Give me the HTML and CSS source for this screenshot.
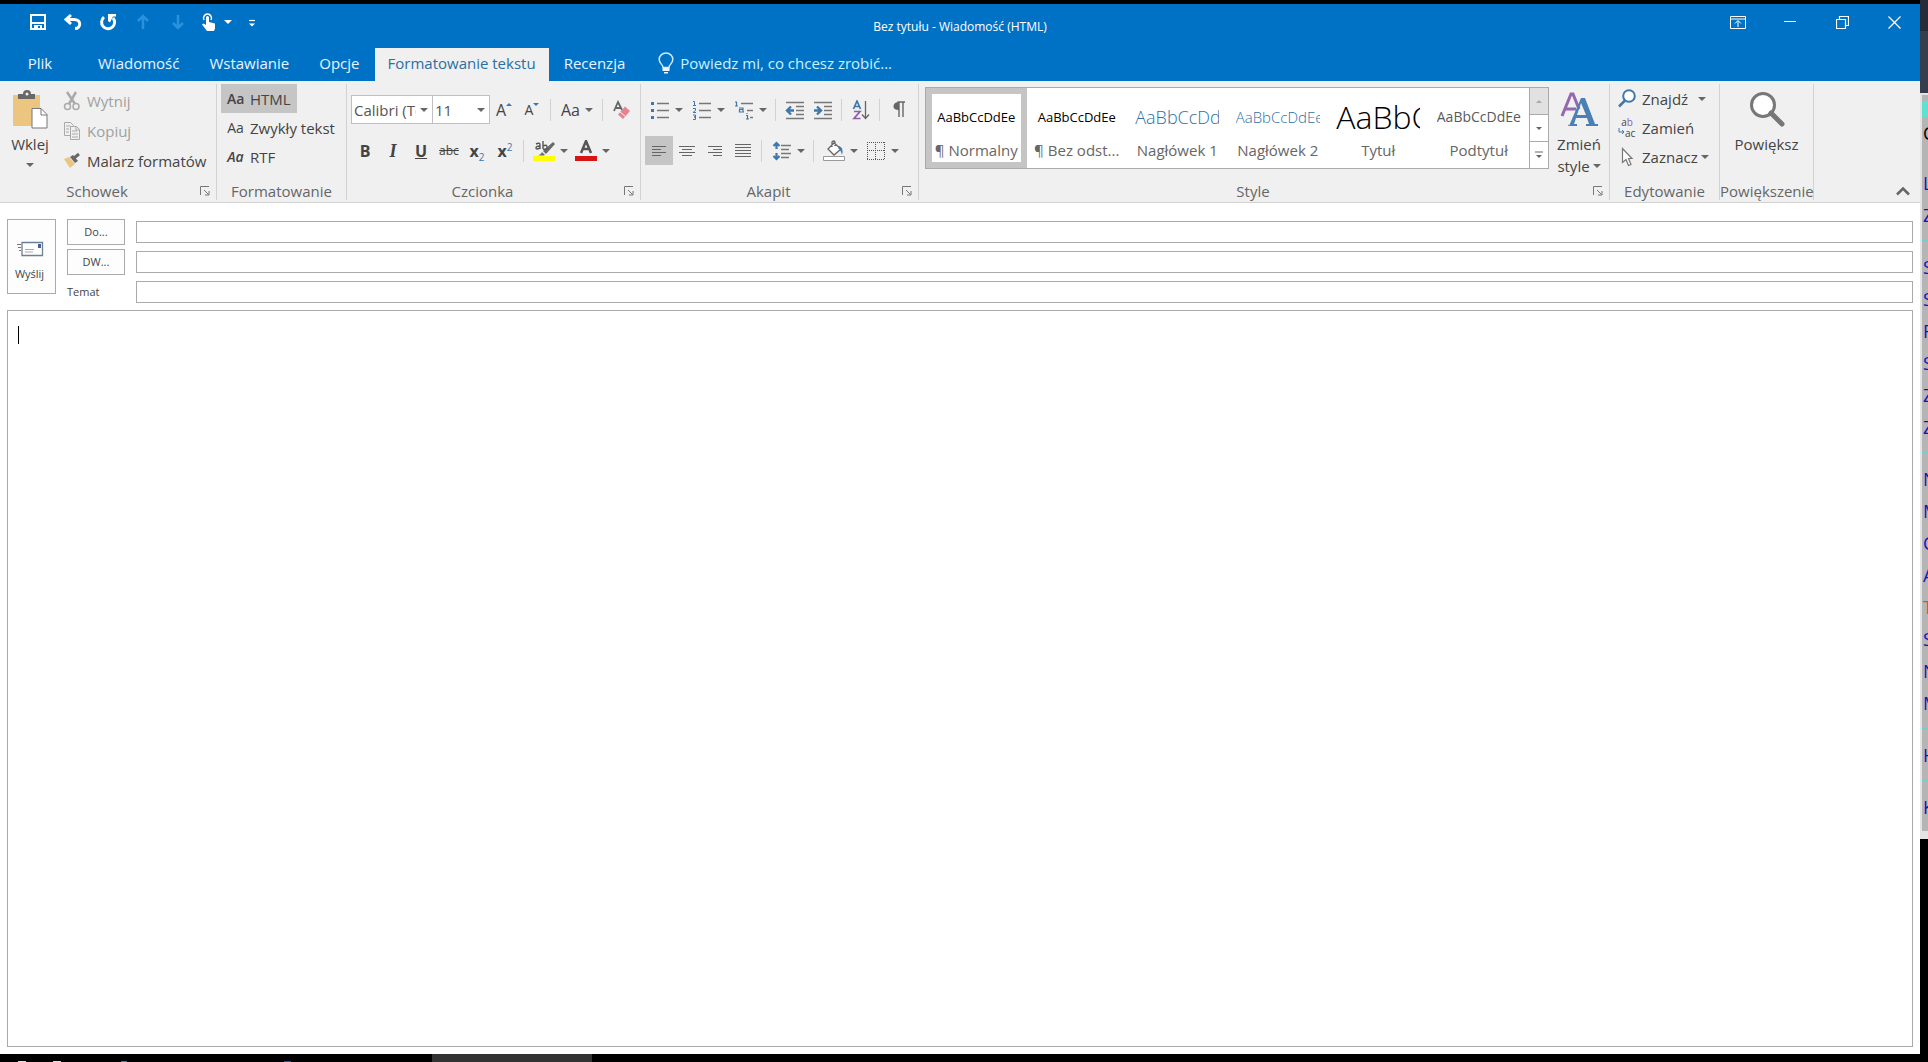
FILE: index.html
```html
<!DOCTYPE html>
<html lang="pl">
<head>
<meta charset="utf-8">
<title>Bez tytułu - Wiadomość (HTML)</title>
<link rel="stylesheet" href="styles.css">
</head>
<body>
<div class="desktop">
  <main class="window">
    <header class="titlebar">
      <div class="quick">
        <button class="qbtn" aria-label="Zapisz"><svg width="18" height="18" viewBox="0 0 18 18"><path d="M2 2h14v14H2z" fill="none" stroke="#fff" stroke-width="2"/><path d="M3 9h12v2H3zM5 12h8v4h-2v-3H9v3H5z" fill="#fff"/></svg></button>
        <button class="qbtn" aria-label="Cofnij"><svg width="20" height="18" viewBox="0 0 20 18"><path d="M8 2L3 6.500L8 11M3.500 6.500H11c8 0 7 9 1 9" fill="none" stroke="#fff" stroke-width="3"/></svg></button>
        <button class="qbtn" aria-label="Ponów"><svg width="18" height="18" viewBox="0 0 18 18"><path d="M5 4.200A6.500 6.500 0 1 0 14 5" fill="none" stroke="#fff" stroke-width="3"/><path d="M9 1h8v2.500h-3L11 9.500L9 8z" fill="#fff"/></svg></button>
        <button class="qbtn" aria-label="Poprzedni element"><svg width="14" height="18" viewBox="0 0 14 18"><path d="M7 16V3M2 8l5-5l5 5" fill="none" stroke="#2a92dc" stroke-width="2.500"/></svg></button>
        <button class="qbtn" aria-label="Następny element"><svg width="14" height="18" viewBox="0 0 14 18"><path d="M7 2v13M2 10l5 5l5-5" fill="none" stroke="#2a92dc" stroke-width="2.500"/></svg></button>
        <button class="qbtn touch" aria-label="Tryb dotyku"><svg width="16" height="20" viewBox="0 0 16 20"><path d="M3 8A4 4 0 1 1 10 8" fill="none" stroke="#fff" stroke-width="1.500"/><path d="M5 5q1.500-2 3 0v5l6 1.500v5l-1 2.500H6L1 12.500l1.500-1L5 13z" fill="#fff"/></svg></button>
        <button class="qmore" aria-label="Opcje dotyku"><i class="tri"></i></button>
        <button class="qmore wide" aria-label="Dostosuj pasek"><svg width="8" height="9" viewBox="0 0 8 9"><path d="M1 2.500h6" stroke="#fff" stroke-width="1.200"/><path d="M1 5.500h6L4 8.500z" fill="#fff"/></svg></button>
      </div>
      <h1 class="title">Bez tytułu - Wiadomość (HTML)</h1>
      <div class="controls">
        <button class="cbtn" aria-label="Opcje wstążki"><svg width="16" height="14" viewBox="0 0 16 14"><path d="M.5 1.500h15v12H.5zM.5 4h15M8 12V6M5 8.500L8 5.500l3 3" fill="none" stroke="#fff"/></svg></button>
        <button class="cbtn" aria-label="Minimalizuj"><svg width="12" height="12" viewBox="0 0 12 12"><path d="M0 5.500h12" stroke="#fff"/></svg></button>
        <button class="cbtn" aria-label="Przywróć"><svg width="13" height="13" viewBox="0 0 13 13"><path d="M.5 3.500h9v9h-9zM3.500 3V.5h9v9H10" fill="none" stroke="#fff" stroke-width="1.200"/></svg></button>
        <button class="cbtn" aria-label="Zamknij"><svg width="13" height="13" viewBox="0 0 13 13"><path d="M.5.5l12 12M12.500.5l-12 12" stroke="#fff" stroke-width="1.200"/></svg></button>
      </div>
    </header>

    <nav class="tabs">
      <button class="tab file">Plik</button>
      <button class="tab">Wiadomość</button>
      <button class="tab">Wstawianie</button>
      <button class="tab">Opcje</button>
      <button class="tab active">Formatowanie tekstu</button>
      <button class="tab">Recenzja</button>
      <button class="tab tell"><svg width="16" height="22" viewBox="0 0 16 22"><path d="M5 15.500c0-3-3.800-4-3.800-8a6.800 6.500 0 0 1 13.600 0c0 4-3.800 5-3.800 8z" fill="none" stroke="#cfeaff" stroke-width="1.500"/><path d="M4.500 16h7v3h-7zM6 20h4v1.500H6z" fill="#e6f5ff"/></svg>Powiedz mi, co chcesz zrobić...</button>
    </nav>

    <section class="ribbon">
      <div class="group clipboard">
        <div class="content">
          <button class="big paste">
            <svg width="36" height="40" viewBox="0 0 36 40"><path d="M1 5h27v31H1z" fill="#ecc581"/><path d="M6 9V4h5q0-4 4-4t4 4h4v5z" fill="#686868"/><circle cx="15" cy="4" r="1.500" fill="#f0f0f0"/><path d="M20 18.500h9l6 6V38H20z" fill="#fff" stroke="#777"/><path d="M29 18.500V25h6" fill="none" stroke="#777"/></svg>
            <span>Wklej</span><i class="tri"></i>
          </button>
          <div class="stack loose">
            <button class="line" disabled><svg width="18" height="20" viewBox="0 0 18 20"><path d="M4 1l8 12M13 1L6 13" stroke="#aaa" stroke-width="2.500" fill="none"/><circle cx="4.500" cy="15.500" r="3" fill="none" stroke="#aaa" stroke-width="1.500"/><circle cx="13" cy="15.500" r="3" fill="none" stroke="#aaa" stroke-width="1.500"/></svg>Wytnij</button>
            <button class="line" disabled><svg width="18" height="20" viewBox="0 0 18 20"><path d="M7 14.500H1.500v-13h6l3 3V6M3 5h4M3 8h3M3 11h3" fill="none" stroke="#aaa"/><path d="M7.500 5.500h6l3 3v10h-9zM9 10h5M9 13h6M9 16h6M13 5.500V9h3" fill="#f0f0f0" stroke="#aaa"/></svg>Kopiuj</button>
            <button class="line"><svg width="18" height="20" viewBox="0 0 18 20"><path d="M1 8l5-2l6 7l-5 4z" fill="#ecc581"/><path d="M7 6l3-2l5 6l-3 2z" fill="#686868"/><path d="M11 7l5-4" stroke="#686868" stroke-width="3"/></svg>Malarz formatów</button>
          </div>
        </div>
        <div class="caption"><span>Schowek</span><button class="launcher" aria-label="Schowek: więcej"><svg width="10" height="10" viewBox="0 0 10 10"><path d="M.5 9V.5H9M4 4l4.500 4.500M9 5v4H5" fill="none" stroke="#777"/></svg></button></div>
      </div>

      <div class="group format">
        <div class="content">
          <div class="stack">
            <button class="mode on"><b>Aa</b>HTML</button>
            <button class="mode"><span>Aa</span>Zwykły tekst</button>
            <button class="mode"><em>Aa</em>RTF</button>
          </div>
        </div>
        <div class="caption"><span>Formatowanie</span></div>
      </div>

      <div class="group font">
        <div class="content rows">
          <div class="bar">
            <label class="combo name"><select aria-label="Czcionka"><option>Calibri (Tekst podstawowy)</option></select><i class="tri"></i></label>
            <label class="combo size"><select aria-label="Rozmiar czcionki"><option>11</option></select><i class="tri"></i></label>
            <button class="ib" aria-label="Zwiększ czcionkę"><span class="glyph">A</span><svg width="6" height="16" viewBox="0 0 6 16"><path d="M0 4l3-3l3 3z" fill="#3f77ad"/></svg></button>
            <button class="ib" aria-label="Zmniejsz czcionkę"><span class="glyph small">A</span><svg width="6" height="16" viewBox="0 0 6 16"><path d="M0 1h6L3 4z" fill="#3f77ad"/></svg></button>
            <i class="sep"></i>
            <button class="ib dd"><span class="glyph">Aa</span><i class="tri"></i></button>
            <i class="sep"></i>
            <button class="ib" aria-label="Wyczyść formatowanie"><svg width="18" height="20" viewBox="0 0 18 20"><path d="M1 11L5 2l4 8M3 8h5" fill="none" stroke="#666" stroke-width="1.800"/><path d="M12 6.500l5 4.500l-7 8l-5-4.500z" fill="#e4848f"/><path d="M7 12l5.500 4.500" stroke="#f0f0f0" stroke-width="1"/></svg></button>
          </div>
          <div class="bar">
            <button class="ib"><b class="glyph">B</b></button>
            <button class="ib"><i class="glyph ital">I</i></button>
            <button class="ib"><u class="glyph">U</u></button>
            <button class="ib"><s class="glyph strike">abc</s></button>
            <button class="ib"><span class="glyph bold">x<sub>2</sub></span></button>
            <button class="ib"><span class="glyph bold">x<sup>2</sup></span></button>
            <i class="sep"></i>
            <button class="ib dd" aria-label="Wyróżnienie"><svg width="22" height="22" viewBox="0 0 22 22"><path d="M0 16h22v5H0z" fill="#ff0"/><path d="M20 2l2 2l-9 10l-3-3z" fill="#686868"/><path d="M5 15q3 0 4-3l3 3q-3 1-7 0z" fill="#686868"/><path d="M3 4q4-2 4 1v4M7 6q-4 0-4 2q0 2 4 0M10 1v8M10 6q4-2 4 1t-4 2" fill="none" stroke="#555" stroke-width="1.400"/></svg><i class="tri"></i></button>
            <button class="ib dd" aria-label="Kolor czcionki"><svg width="22" height="22" viewBox="0 0 22 22"><path d="M0 16h22v5H0z" fill="#d91313"/><path d="M6 13l5-12l5 12M8 9h6" fill="none" stroke="#555" stroke-width="2.500"/></svg><i class="tri"></i></button>
          </div>
        </div>
        <div class="caption"><span>Czcionka</span><button class="launcher" aria-label="Czcionka: więcej"><svg width="10" height="10" viewBox="0 0 10 10"><path d="M.5 9V.5H9M4 4l4.500 4.500M9 5v4H5" fill="none" stroke="#777"/></svg></button></div>
      </div>

      <div class="group para">
        <div class="content rows">
          <div class="bar">
            <button class="ib dd" aria-label="Punktory"><svg width="20" height="20" viewBox="0 0 20 20"><path d="M7 3.500h12M7 10.500h12M7 17.500h12" stroke="#777" stroke-width="1.300"/><path d="M1 2h3v3H1zM1 9h3v3H1zM1 16h3v3H1z" fill="#3f77ad"/></svg><i class="tri"></i></button>
            <button class="ib dd" aria-label="Numerowanie"><svg width="20" height="20" viewBox="0 0 20 20"><path d="M7 3.500h12M7 10.500h12M7 17.500h12" stroke="#777" stroke-width="1.300"/><path d="M1 1.500h1.500v4M1 5.500h3M1 8.500h2.500v2L1 12.500h3M1 15h2.500v2H2h1.500v2.500H1" fill="none" stroke="#3f77ad"/></svg><i class="tri"></i></button>
            <button class="ib dd" aria-label="Lista wielopoziomowa"><svg width="20" height="20" viewBox="0 0 20 20"><path d="M7 3.500h12M13 10.500h6M16 17.500h3" stroke="#777" stroke-width="1.300"/><path d="M1 2h1.500v4M1 6h3M5 8h4v4M9 9.500H5.500V12H10M13 13v1M12 15.500h1.500V19M12 19h3" fill="none" stroke="#3f77ad" stroke-width="1.200"/></svg><i class="tri"></i></button>
            <i class="sep"></i>
            <button class="ib" aria-label="Zmniejsz wcięcie"><svg width="20" height="20" viewBox="0 0 20 20"><path d="M1 2.500h18M11 6.500h8M11 10.500h8M11 14.500h8M1 18.500h18" stroke="#777" stroke-width="1.300"/><path d="M9 10.500H3M6 6.500l-4 4l4 4" fill="none" stroke="#3f77ad" stroke-width="2.400"/></svg></button>
            <button class="ib" aria-label="Zwiększ wcięcie"><svg width="20" height="20" viewBox="0 0 20 20"><path d="M1 2.500h18M11 6.500h8M11 10.500h8M11 14.500h8M1 18.500h18" stroke="#777" stroke-width="1.300"/><path d="M1 10.500h6M4 6.500l4 4l-4 4" fill="none" stroke="#3f77ad" stroke-width="2.400"/></svg></button>
            <i class="sep"></i>
            <button class="ib" aria-label="Sortuj"><svg width="18" height="20" viewBox="0 0 18 20"><path d="M1.500 9L5 1l3.500 8M3 6.500h4" fill="none" stroke="#3f77ad" stroke-width="1.700"/><path d="M2 11.500h6L2 18.500h6.500" fill="none" stroke="#8a5fa5" stroke-width="1.700"/><path d="M13.500 1v17M10 14.500l3.500 4l3.500-4" fill="none" stroke="#666" stroke-width="1.300"/></svg></button>
            <i class="sep"></i>
            <button class="ib" aria-label="Znaki niedrukowane"><svg width="14" height="18" viewBox="0 0 14 18"><path d="M5.500 1H13M7 1v15M11 1v15" stroke="#666" stroke-width="1.400"/><path d="M7 1v8Q1 9 1.500 5Q2 1 7 1z" fill="#666"/></svg></button>
          </div>
          <div class="bar">
            <button class="ib on" aria-label="Do lewej"><svg width="16" height="16" viewBox="0 0 16 16"><path d="M1 3.500h14M1 6.500h9M1 9.500h14M1 12.500h9" stroke="#666"/></svg></button>
            <button class="ib" aria-label="Do środka"><svg width="16" height="16" viewBox="0 0 16 16"><path d="M0 3.500h16M3 6.500h10M0 9.500h16M3 12.500h10" stroke="#666"/></svg></button>
            <button class="ib" aria-label="Do prawej"><svg width="16" height="16" viewBox="0 0 16 16"><path d="M1 3.500h14M6 6.500h9M1 9.500h14M6 12.500h9" stroke="#666"/></svg></button>
            <button class="ib" aria-label="Wyjustuj"><svg width="16" height="16" viewBox="0 0 16 16"><path d="M0 1.500h16M0 4.500h16M0 7.500h16M0 10.500h16M0 13.500h16" stroke="#666"/></svg></button>
            <i class="sep"></i>
            <button class="ib dd" aria-label="Interlinia"><svg width="20" height="20" viewBox="0 0 20 20"><path d="M9 4.500h10M9 8.500h8M9 12.500h10M9 16.500h8" stroke="#777" stroke-width="1.300"/><path d="M4.500 3v5M1.500 5l3-3l3 3M4.500 12v5M1.500 15l3 3l3-3" fill="none" stroke="#3f77ad" stroke-width="2.200"/></svg><i class="tri"></i></button>
            <i class="sep"></i>
            <button class="ib dd" aria-label="Cieniowanie"><svg width="22" height="22" viewBox="0 0 22 22"><path d="M.5 16.500h21v4H.5z" fill="#fff" stroke="#999"/><path d="M11 3l7 6l-7 6l-6-6zM9 7V2q2-2 3 0v4" fill="#fff" stroke="#666" stroke-width="1.300"/><path d="M16 6q5 2 3 9q-1-5-4-7z" fill="#3f77ad"/></svg><i class="tri"></i></button>
            <button class="ib dd" aria-label="Obramowania"><svg width="20" height="20" viewBox="0 0 20 20"><path d="M1 1.500h18M1 18.500h18M1.500 1v18M18.500 1v18M9.500 1v18M1 9.500h18" stroke="#555" stroke-dasharray="1 1"/></svg><i class="tri"></i></button>
          </div>
        </div>
        <div class="caption"><span>Akapit</span><button class="launcher" aria-label="Akapit: więcej"><svg width="10" height="10" viewBox="0 0 10 10"><path d="M.5 9V.5H9M4 4l4.500 4.500M9 5v4H5" fill="none" stroke="#777"/></svg></button></div>
      </div>

      <div class="group styles">
        <div class="content">
          <div class="gallery">
            <button class="style chosen"><span class="sample">AaBbCcDdEe</span><span class="label">¶ Normalny</span></button>
            <button class="style"><span class="sample">AaBbCcDdEe</span><span class="label">¶ Bez odst...</span></button>
            <button class="style"><span class="sample h1">AaBbCcDdEe</span><span class="label">Nagłówek 1</span></button>
            <button class="style"><span class="sample h2">AaBbCcDdEe</span><span class="label">Nagłówek 2</span></button>
            <button class="style"><span class="sample head">AaBbCcDdEe</span><span class="label">Tytuł</span></button>
            <button class="style"><span class="sample sub">AaBbCcDdEe</span><span class="label">Podtytuł</span></button>
          </div>
          <div class="scroller">
            <button disabled aria-label="W górę"><svg width="8" height="5" viewBox="0 0 8 5"><path d="M1 4l3-3l3 3z" fill="#aaa"/></svg></button>
            <button aria-label="W dół"><svg width="8" height="5" viewBox="0 0 8 5"><path d="M1 1h6L4 4z" fill="#666"/></svg></button>
            <button aria-label="Więcej stylów"><svg width="8" height="8" viewBox="0 0 8 8"><path d="M0 1h8" stroke="#666"/><path d="M1 4h6L4 7z" fill="#666"/></svg></button>
          </div>
          <button class="big change">
            <svg width="38" height="40" viewBox="0 0 38 40"><path d="M2 26L11 4h2l6 15M5 19h11" fill="none" stroke="#9468ae" stroke-width="3"/><path d="M9 36L21 8h4l10 26h3v2H26v-2h3l-2-6H16l-2 6h3v2H8v-2zM17 25h9l-5-12z" fill="#4a80b5" fill-rule="evenodd"/></svg>
            <span>Zmień</span><span class="with">style<i class="tri"></i></span>
          </button>
        </div>
        <div class="caption"><span>Style</span><button class="launcher" aria-label="Style: więcej"><svg width="10" height="10" viewBox="0 0 10 10"><path d="M.5 9V.5H9M4 4l4.500 4.500M9 5v4H5" fill="none" stroke="#777"/></svg></button></div>
      </div>

      <div class="group edit">
        <div class="content">
          <div class="stack">
            <button class="line"><svg width="18" height="20" viewBox="0 0 18 20"><circle cx="11" cy="7" r="5.800" fill="#fff" stroke="#3f77ad" stroke-width="2"/><path d="M7 11.500l-6 6" stroke="#3f77ad" stroke-width="2.500"/></svg>Znajdź<i class="tri far"></i></button>
            <button class="line"><span class="swap"><span>a<b>b</b></span><span class="to"><svg width="7" height="8" viewBox="0 0 7 8"><path d="M1 0v4h5M4 2l2 2l-2 2" fill="none" stroke="#3f77ad"/></svg>ac</span></span>Zamień</button>
            <button class="line"><svg width="18" height="20" viewBox="0 0 18 20"><path d="M4.500 1.500v14l3.500-3l2.500 6l2.500-1l-2.500-6H14z" fill="#fff" stroke="#777" stroke-width="1.200"/></svg>Zaznacz<i class="tri"></i></button>
          </div>
        </div>
        <div class="caption"><span>Edytowanie</span></div>
      </div>

      <div class="group zoom">
        <div class="content">
          <button class="big">
            <svg width="36" height="40" viewBox="0 0 36 40"><circle cx="14" cy="15" r="11.500" fill="#fff" stroke="#777" stroke-width="3"/><path d="M22 23l11 11" stroke="#777" stroke-width="5" stroke-linecap="round"/></svg>
            <span>Powiększ</span>
          </button>
        </div>
        <div class="caption"><span>Powiększenie</span></div>
      </div>

      <button class="collapse" aria-label="Zwiń wstążkę"><svg width="14" height="10" viewBox="0 0 14 10"><path d="M1 8.500l6-6l6 6" fill="none" stroke="#666" stroke-width="2.500"/></svg></button>
    </section>

    <form class="compose">
      <button class="send" type="button"><svg width="28" height="16" viewBox="0 0 28 16"><path d="M6 1.500h20.500v13H6z" fill="#fff" stroke="#6d7f92" stroke-width="1.300"/><path d="M22 3h3v4h-3z" fill="#44618a"/><path d="M9 8.500h9M9 11h8" stroke="#aaa"/><path d="M1 3.500h4M2 6.500h3M3 9.500h2" stroke="#777"/></svg>Wyślij</button>
      <div class="fields">
        <button class="who" type="button">Do...</button><input aria-label="Do" type="text">
        <button class="who" type="button">DW...</button><input aria-label="DW" type="text">
        <label for="subject">Temat</label><input id="subject" type="text">
      </div>
    </form>

    <div class="editor">
      <textarea aria-label="Treść wiadomości"></textarea>
      <i class="cursor"></i>
    </div>
  </main>

  <aside class="behind">
    <div class="dark"></div>
    <div class="dusk"></div>
    <div class="list">
      <i class="mark"></i>
      <p class="black">C</p>
      <p>L</p><p>Z</p>
      <hr>
      <p>S</p><p>S</p><p>F</p><p>S</p><p>Z</p><p>Z</p>
      <hr>
      <p>N</p><p>M</p><p>C</p><p>A</p><p class="orange">T</p><p>S</p><p>N</p><p>M</p>
      <hr>
      <p>H</p>
      <hr>
      <p>K</p>
    </div>
  </aside>

  <footer class="taskbar">
    <svg width="310" height="8" viewBox="0 0 310 8"><path d="M18 7h8v1h-8zM53 7h8v1h-8z" fill="#ddd"/><path d="M121 7h6v1h-6z" fill="#4a7890"/><path d="M284 7h7v1h-7z" fill="#24507c"/></svg>
    <div class="task"></div>
  </footer>
</div>
</body>
</html>
```
FILE: styles.css
```css
* { box-sizing: border-box; }

body {
  margin: 0;
  background: #000;
  color: #444;
  font: 15px/20px "Open Sans", "Noto Sans", sans-serif;
}

button {
  margin: 0;
  padding: 0;
  border: 0;
  background: none;
  color: inherit;
  font: inherit;
}

svg { display: block; flex: none; }

.desktop {
  display: grid;
  grid-template: minmax(0, 1fr) 8px / minmax(0, 1fr) 8px;
  min-height: 100vh;
}

.window {
  display: flex;
  flex-direction: column;
  min-width: 0;
  margin-top: 4px;
  background: #fff;
}

.tri {
  flex: none;
  width: 0;
  border: 4px solid transparent;
  border-top-color: #666;
  border-bottom: 0;
}

/* Title bar */
.titlebar {
  display: grid;
  grid-template-columns: 1fr auto 1fr;
  align-items: center;
  height: 36px;
  background: #0072c6;
  color: #fff;
}
.quick { display: flex; align-items: center; padding-left: 20px; }
.qbtn { display: flex; justify-content: center; width: 35px; }
.qbtn.touch { width: 28px; }
.qmore { display: flex; justify-content: center; width: 10px; }
.qmore.wide { margin-left: 14px; }
.quick .tri { border-top-color: #fff; }
.title { margin: 10px 0 0; font-size: 12px; font-weight: 400; line-height: 16px; }
.controls { display: flex; justify-content: flex-end; }
.cbtn { display: flex; justify-content: center; align-items: center; width: 52px; height: 36px; }

/* Tabs */
.tabs {
  display: flex;
  align-items: flex-end;
  height: 41px;
  background: #0072c6;
  color: #e8f5ff;
}
.tab { height: 33px; padding: 0 15px 4px; white-space: nowrap; }
.tab.file { width: 80px; margin-right: 3px; }
.tab.active { padding: 0 13px 4px; background: #f0f0f0; color: #2a6ea3; }
.tab.tell { display: flex; align-items: center; gap: 6px; padding-left: 18px; color: #c9f2ff; }

/* Ribbon */
.ribbon {
  display: flex;
  height: 122px;
  border-bottom: 1px solid #d2d2d2;
  background: #f0f0f0;
}
.group {
  display: flex;
  flex-direction: column;
  flex: none;
  margin: 3px 0 2px;
  border-right: 1px solid #d2d2d2;
}
.content { display: flex; flex: 1; min-height: 0; }
.caption { display: flex; align-items: center; height: 18px; color: #666; line-height: 18px; }
.caption span { flex: 1; text-align: center; white-space: nowrap; }
.launcher { display: flex; justify-content: center; width: 22px; }

.clipboard { width: 217px; }
.format { width: 130px; }
.font { width: 294px; }
.para { width: 278px; }
.styles { width: 691px; }
.edit { width: 110px; }
.zoom { width: 94px; }

.big {
  display: flex;
  flex-direction: column;
  align-items: center;
  padding-top: 6px;
}
.big span { margin-top: 3px; line-height: 22px; }
.big .tri { margin-top: 8px; }
.big .with { display: flex; align-items: center; gap: 3px; margin: 0; }
.big .with .tri { margin: 0; }
.paste { width: 60px; }
.change { width: 60px; }
.zoom .big { width: 100%; }

.stack { display: flex; flex-direction: column; align-items: flex-start; }
.line { display: flex; align-items: center; gap: 6px; height: 29px; white-space: nowrap; }
.loose { padding: 2px 0 0 3px; }
.loose .line { height: 30px; }
.line:disabled { color: #a0a0a0; }
.edit .stack { padding-left: 8px; }
.line .tri { margin-left: -3px; }
.line .tri.far { margin-left: 4px; }

.mode { display: flex; align-items: center; gap: 6px; height: 29px; padding: 0 6px; white-space: nowrap; }
.format .stack { padding-left: 4px; }
.mode.on, .ib.on { background: #c5c5c5; }
.mode b, .mode span, .mode em { width: 17px; font-size: 14px; }
.mode b { font-weight: 600; }
.mode em { font-weight: 600; }

.swap { display: flex; flex-direction: column; width: 18px; font-size: 10px; line-height: 11px; }
.swap b { color: #8a5fa5; font-weight: 400; }
.swap .to { display: flex; }

/* Tool rows */
.rows { flex-direction: column; gap: 12px; padding: 11px 0 0 4px; }
.bar { display: flex; align-items: center; height: 29px; }
.ib { display: flex; flex: none; justify-content: center; align-items: center; width: 28px; height: 29px; }
.ib.dd { gap: 5px; width: 42px; }
.sep { flex: none; width: 1px; height: 22px; margin: 0 5px 0 4px; background: #d2d2d2; }
.glyph { font-size: 16px; }
.glyph.small { font-size: 14px; }
.glyph.ital { font-family: "Liberation Serif", serif; font-size: 18px; font-weight: 700; }
.glyph.strike { font-size: 12px; }
.glyph.bold, u.glyph { font-weight: 700; }
.glyph sub, .glyph sup { color: #3f77ad; font-size: 10px; font-weight: 400; line-height: 0; }

.combo { display: flex; align-items: center; height: 29px; border: 1px solid #c0c0c0; background: #fff; }
.combo select {
  appearance: none;
  flex: 1;
  min-width: 0;
  padding: 0 0 0 2px;
  border: 0;
  background: none;
  color: #555;
  font: inherit;
  text-overflow: clip;
}
.combo .tri { margin: 0 4px; }
.combo.name { width: 82px; }
.combo.size { width: 57px; border-left: 0; }

/* Style gallery */
.styles .content { padding: 3px 0 0 6px; }
.gallery {
  display: flex;
  flex: 1;
  height: 82px;
  overflow: hidden;
  border: 1px solid #aaa;
  border-right: 0;
  background: #fff;
}
.style {
  display: flex;
  flex: 1 1 100px;
  flex-direction: column;
  align-items: center;
  min-width: 0;
  padding: 6px 0;
}
.style.chosen { border: 6px solid #c5c5c5; padding: 0; }
.sample {
  height: 46px;
  color: #000;
  font-size: 13px;
  line-height: 46px;
  text-align: left;
  white-space: nowrap;
}
.sample.h1, .sample.h2, .sample.head, .sample.sub { width: 84px; overflow: hidden; }
.sample.h1 { color: #2e6fa5; font-size: 18px; font-weight: 300; }
.sample.h2 { color: #2e6fa5; font-size: 15px; font-weight: 300; }
.sample.head { font-size: 32px; font-weight: 300; }
.sample.sub { color: #5a5a5a; font-size: 14px; }
.label { color: #666; white-space: nowrap; }
.scroller { display: flex; flex-direction: column; width: 20px; height: 82px; border: 1px solid #aaa; }
.scroller button { display: flex; flex: 1; justify-content: center; align-items: center; background: #fff; }
.scroller button + button { border-top: 1px solid #aaa; }
.scroller button:disabled { background: #e1e1e1; }
.styles .big { padding-top: 3px; }

.collapse { align-self: flex-end; margin: 0 10px 6px auto; }

/* Message header */
.compose { display: flex; gap: 11px; padding: 16px 7px 5px; font-size: 11px; line-height: 16px; }
.send {
  display: flex;
  flex-direction: column;
  align-items: center;
  gap: 9px;
  width: 49px;
  height: 75px;
  padding: 21px 4px 0 0;
  border: 1px solid #aaa;
  background: #fdfdfd;
}
.fields {
  display: grid;
  flex: 1;
  grid-template-columns: 58px 1fr;
  grid-auto-rows: 26px;
  gap: 4px 11px;
  align-items: center;
}
.who { height: 26px; border: 1px solid #aaa; background: #fdfdfd; }
.fields input { min-width: 0; height: 22px; border: 1px solid #aaa; background: #fff; font: inherit; }

/* Message body */
.editor { position: relative; display: flex; flex: 1; margin: 0 7px 7px; }
.editor textarea {
  flex: 1;
  padding: 14px 11px;
  border: 1px solid #aaa;
  outline: 0;
  background: #fff;
  font: inherit;
  resize: none;
}
.cursor { position: absolute; top: 16px; left: 11px; width: 1px; height: 18px; background: #000; }

/* Edge of the window behind */
.behind { overflow: hidden; background: #000; font-size: 18px; }
.dark { height: 31px; background: #252b38; }
.dusk { height: 62px; background: #363e4e; }
.list {
  height: 746px;
  padding-top: 6px;
  border: solid #e4e4e4;
  border-width: 2px 0 8px 2px;
  background: #b5b5b5;
}
.list p { margin: 0; padding-left: 1px; color: #1a0fc0; line-height: 32px; }
.list .mark { display: block; height: 16px; background: #5fe0d0; }
.list .black { margin-bottom: 18px; color: #000; }
.list .orange { color: #d9541e; }
.list hr { height: 1px; margin: 9px 0 10px; border: 0; background: #6fd0c8; }

/* Taskbar */
.taskbar { display: flex; grid-column: 1 / -1; background: #000; }
.task { width: 160px; margin-left: 122px; background: #333; }
```
